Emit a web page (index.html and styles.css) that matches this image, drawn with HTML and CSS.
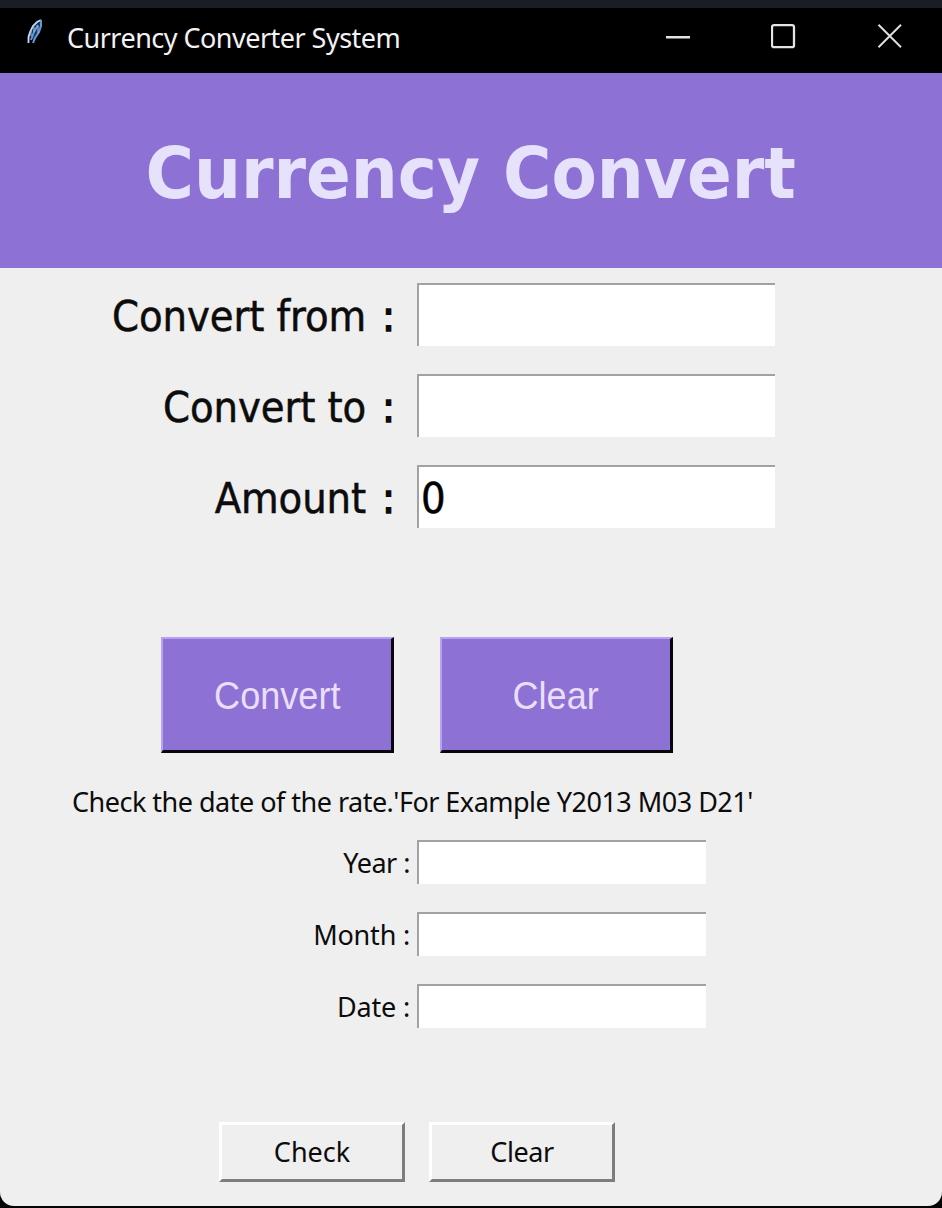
FILE: index.html
```html
<!DOCTYPE html>
<html lang="en">
<head>
<meta charset="utf-8">
<title>Currency Converter System</title>
<link rel="stylesheet" href="styles.css">
</head>
<body>
<div class="window">
  <header class="titlebar">
    <svg class="feather" width="18" height="28" viewBox="0 0 18 28" fill="none">
      <path d="M2 25 3 17 7 8 14 2 15 8 12 17 8 23 5 18Z" fill="#173359"/>
      <path d="M2.5 25V19L4 14 7 8 11 4 15 2" stroke="#c6d9ed" stroke-width="1.8"/>
      <path d="M15 2V8L13 14 9 20 7 25M5 22 8 14 12 7" stroke="#6698d6" stroke-width="2"/>
      <path d="M5 12V18M8 9V14M12 8V15" stroke="#a2bee1"/>
    </svg>
    <span class="caption">Currency Converter System</span>
    <div class="controls">
      <svg width="26" height="26" viewBox="0 0 26 26"><path d="M1 14.2H25" stroke="#e4e4e4" stroke-width="2.4"/></svg>
      <svg width="26" height="26" viewBox="0 0 26 26"><rect x="1" y="2.2" width="22" height="22" rx="2" fill="none" stroke="#e4e4e4" stroke-width="2.3"/></svg>
      <svg width="26" height="26" viewBox="0 0 26 26"><path d="M1.5 1.7 24 24.2M24 1.7 1.5 24.2" stroke="#dedede" stroke-width="2"/></svg>
    </div>
  </header>
  <div class="banner"><h1>Currency Convert</h1></div>
  <main class="content">
    <div class="form amounts">
      <label for="from">Convert from<span class="colon">:</span></label><input id="from" type="text">
      <label for="to">Convert to<span class="colon">:</span></label><input id="to" type="text">
      <label for="amount">Amount<span class="colon">:</span></label><input id="amount" type="text" value="0">
    </div>
    <div class="actions primary">
      <button type="button"><span>Convert</span></button>
      <button type="button"><span>Clear</span></button>
    </div>
    <p class="hint">Check the date of the rate.'For Example Y2013 M03 D21'</p>
    <div class="form dates">
      <label for="year">Year :</label><input id="year" type="text">
      <label for="month">Month :</label><input id="month" type="text">
      <label for="date">Date :</label><input id="date" type="text">
    </div>
    <div class="actions secondary">
      <button type="button">Check</button>
      <button type="button">Clear</button>
    </div>
  </main>
</div>
</body>
</html>
```
FILE: styles.css
```css
* { box-sizing: border-box; }
body {
  margin: 0;
  height: 1208px;
  overflow: hidden;
  background: #050505;
  font-family: "Noto Sans", sans-serif;
  color: #0c0c0c;
}
.window {
  height: 1206px;
  border-top: 8px solid #181d26;
  border-radius: 0 0 14px 14px;
  background: #efefef;
  overflow: hidden;
}
.titlebar {
  display: flex;
  height: 65px;
  padding: 0 39px 0 26px;
  background: #000;
  color: #f2f2f2;
}
.feather { margin-top: 10px; }
.caption {
  margin-left: 23px;
  font-size: 27px;
  letter-spacing: -.52px;
  line-height: 60px;
  white-space: nowrap;
}
.controls {
  display: flex;
  gap: 80px;
  margin: 15px 0 0 auto;
}
.banner {
  display: flex;
  justify-content: center;
  height: 195px;
  background: #8d71d5;
}
h1 {
  margin: 0;
  font: bold 71px/202px "DejaVu Sans", sans-serif;
  color: #e6e2fb;
  white-space: nowrap;
  transform: scaleX(.93);
}
.content { padding-top: 15px; }
.form { display: grid; justify-items: end; }
.form input {
  width: 100%;
  height: 100%;
  margin: 0;
  padding: 0 2px;
  border: 0 solid #a2a2a2;
  border-width: 2px 0 0 2px;
  outline: 0;
  background: #fff;
  color: #000;
  font: inherit;
}
.form label { white-space: nowrap; }
.amounts {
  grid-template-columns: 395px 358px;
  grid-auto-rows: 63px;
  column-gap: 22px;
  row-gap: 28px;
  font: 43px/67px "DejaVu Sans Condensed", "DejaVu Sans", sans-serif;
  font-stretch: condensed;
  letter-spacing: -.1px;
  -webkit-text-stroke: .5px;
}
.colon {
  display: inline-block;
  margin-left: 16px;
  -webkit-text-stroke: 1.5px;
}
.actions { display: flex; }
.actions button { padding: 0; }
.primary {
  gap: 46px;
  margin: 109px 0 0 161px;
}
.primary button {
  width: 233px;
  height: 116px;
  border: 3px solid;
  border-color: #b7a1f2 #08050e #08050e #b7a1f2;
  border-top-width: 2px;
  border-left-width: 2px;
  background: #8d71d5;
  color: #eadffb;
  font: 39px/1 "Liberation Sans", sans-serif;
}
.primary span {
  display: inline-block;
  padding-top: 2px;
  transform: scaleX(.925);
}
.hint {
  margin: 31px 0 0 72px;
  font-size: 27px;
  letter-spacing: -.51px;
  line-height: 36px;
  white-space: nowrap;
}
.dates {
  grid-template-columns: 410px 289px;
  grid-auto-rows: 44px;
  column-gap: 7px;
  row-gap: 28px;
  margin-top: 20px;
  font-size: 27px;
  letter-spacing: -.2px;
  line-height: 45px;
}
.dates label:first-child { letter-spacing: -.5px; }
.secondary {
  gap: 24px;
  margin: 94px 0 0 219px;
}
.secondary button {
  width: 186px;
  height: 60px;
  padding-bottom: 2px;
  border: 3px solid;
  border-color: #fff #7d7d7d #7d7d7d #fff;
  background: #efefef;
  color: #0c0c0c;
  font: 27px/1 "Noto Sans", sans-serif;
}
.secondary button:last-child { letter-spacing: -.4px; }
```
